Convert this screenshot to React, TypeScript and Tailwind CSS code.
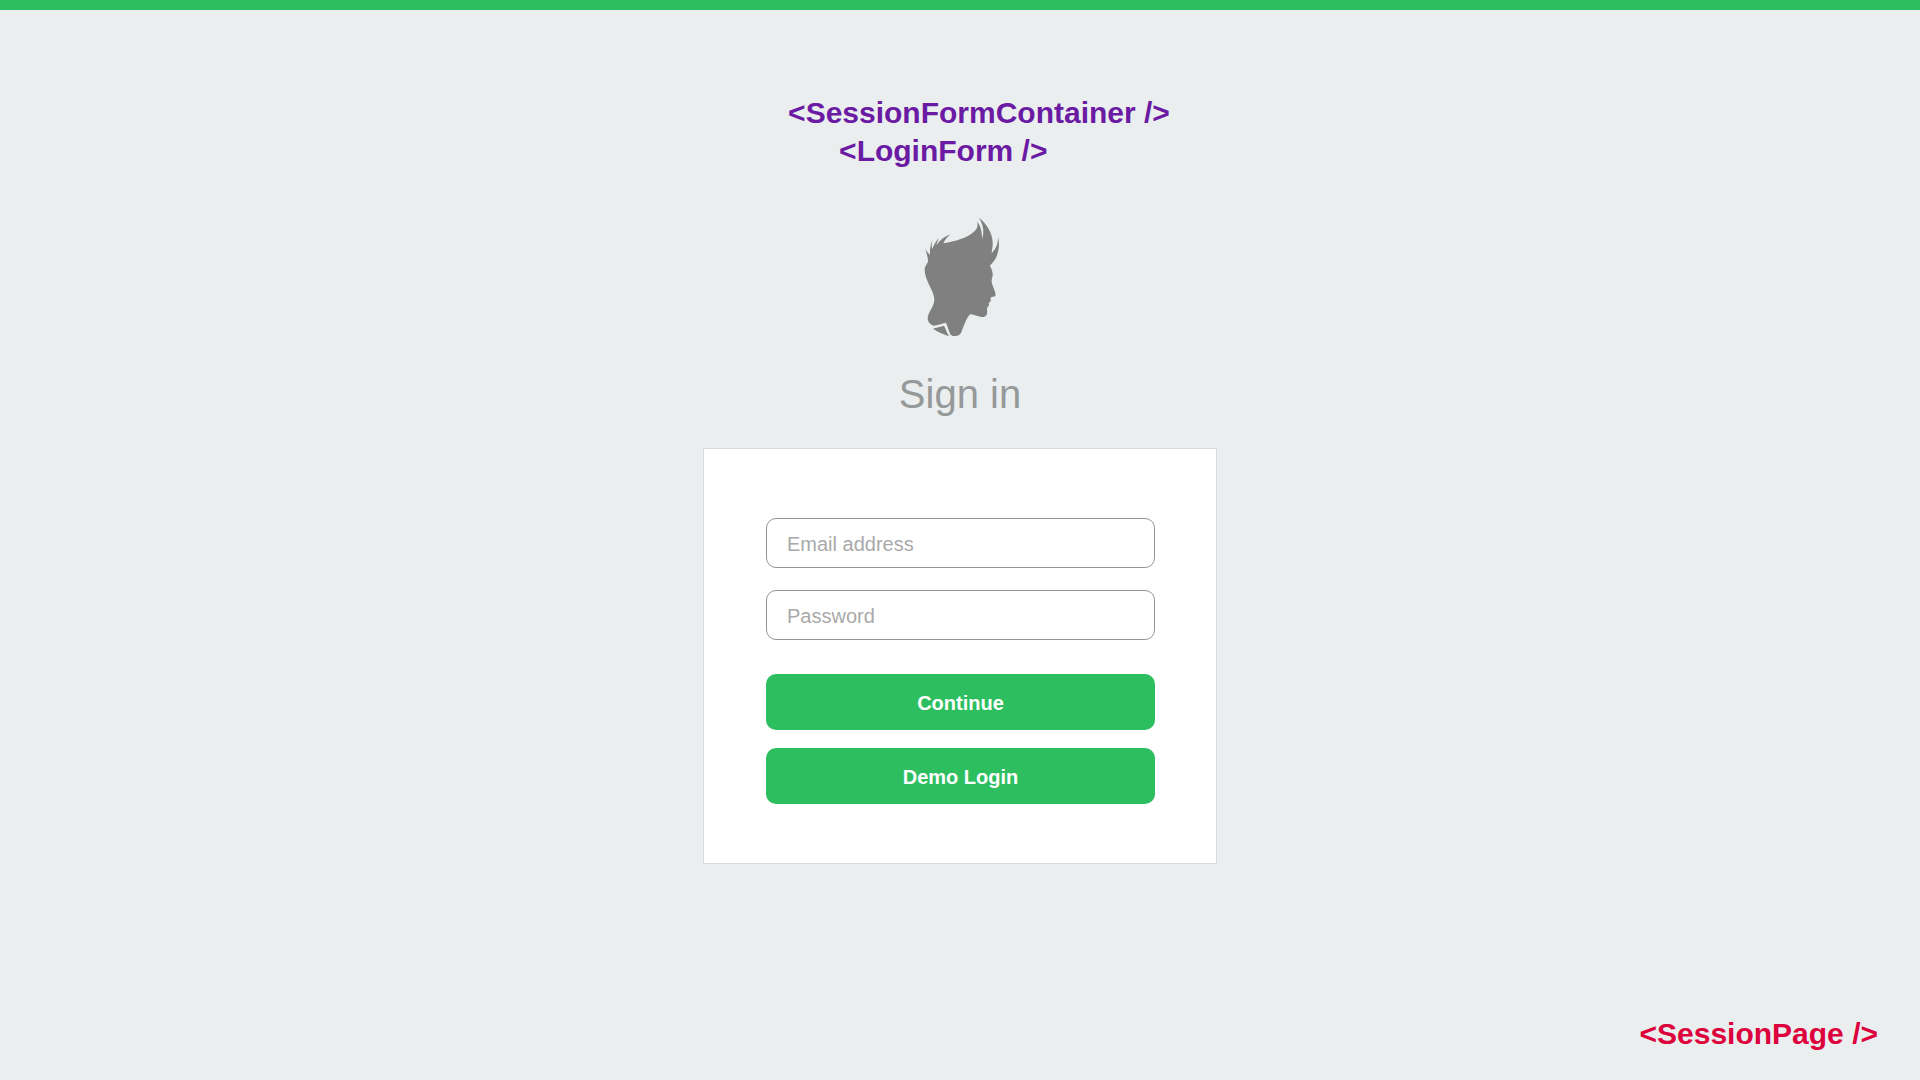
function Silhouette() {
  return (
    <svg viewBox="0 0 360 450" className="mt-[30px] h-[150px] w-[120px]" fill="#808080" role="img" aria-label="Profile silhouette">
      <path d="M130 130C166 125 202 113 220 97C232 86 235 78 231 65C242 77 246 94 246 116C253 98 251 75 237 53C262 73 276 99 278 125C279 138 276 148 275 159C288 147 294 133 294 111C300 133 296 156 288 173C282 185 274 192 270 196C271 202 277 210 278 221C279 231 274 237 275 245C276 257 286 271 287 284C287 289 279 290 274 291C270 294 273 299 272 303C271 307 266 307 266 310C268 315 267 318 264 320C258 325 264 335 260 344C257 351 248 352 241 350C229 349 217 342 211 343C200 352 192 376 184 397C179 408 170 409 163 408C156 408 151 405 149 398C145 388 143 379 138 368C127 371 112 375 100 377C90 373 83 365 83 354C84 336 103 319 103 299C103 272 74 242 74 209C74 198 84 190 84 183C84 169 78 158 76 145C79 153 84 160 90 164C89 148 92 133 97 120C95 132 94 139 97 147C101 135 108 123 117 113C113 121 110 129 110 135C119 120 134 108 151 104C141 111 134 120 130 130Z" />
      <path d="M99 386L132 377C137 387 141 398 147 409C131 402 112 396 99 386Z" />
    </svg>
  );
}

function Field({ id, type, label }: { id: string; type: string; label: string }) {
  return (
    <input
      id={id}
      type={type}
      aria-label={label}
      placeholder={label}
      className="h-[50px] w-full rounded-[10px] border border-[#959595] bg-white px-5 pt-0.5 text-xl text-gray-700 placeholder:text-[#a9a9a9]"
    />
  );
}

const buttonClass = "h-14 w-full rounded-[10px] bg-[#2dbe60] pt-0.5 text-xl font-bold text-white";

export default function App() {
  return (
    <div className="flex min-h-screen flex-col border-t-10 border-[#2dbe60] bg-[#eaeeef] font-['Liberation_Sans',Arial,sans-serif]">
      <main className="flex flex-col items-center pt-[84px]">
        <div className="pl-[38px] text-[30px] leading-[38px] font-bold text-[#6b1ba3]">
          <p>&lt;SessionFormContainer /&gt;</p>
          <p className="pl-[51px]">&lt;LoginForm /&gt;</p>
        </div>
        <Silhouette />
        <h1 className="mt-5 text-[40px] leading-12 text-[#959999]">Sign in</h1>
        <form
          className="mt-[30px] w-full max-w-[514px] border border-[#d9dbdb] bg-white pt-[69px] pr-[61px] pb-[59px] pl-[62px]"
          onSubmit={(e) => e.preventDefault()}
        >
          <div className="flex flex-col gap-[22px]">
            <Field id="email" type="email" label="Email address" />
            <Field id="password" type="password" label="Password" />
          </div>
          <div className="mt-[34px] flex flex-col gap-[18px]">
            <button type="submit" className={buttonClass}>Continue</button>
            <button type="button" className={buttonClass}>Demo Login</button>
          </div>
        </form>
      </main>
      <p className="mt-auto self-end pr-[42px] pb-[27px] text-[30px] leading-[38px] font-bold text-[#dc003c]">
        &lt;SessionPage /&gt;
      </p>
    </div>
  );
}
